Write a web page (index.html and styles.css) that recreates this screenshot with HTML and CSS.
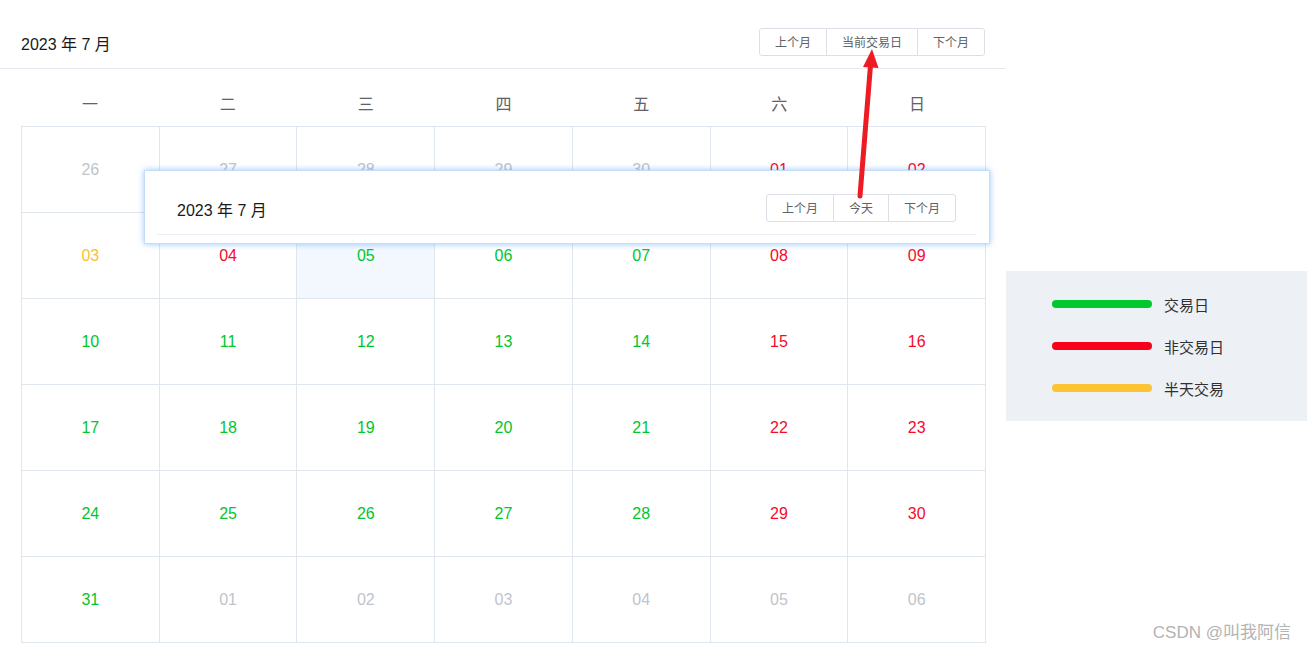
FILE: index.html
```html
<!DOCTYPE html>
<html lang="zh-CN">
<head>
<meta charset="utf-8">
<title>交易日历</title>
<link rel="stylesheet" href="styles.css">
</head>
<body>
<div class="page">
  <div class="calendar">
    <div class="cal-header">
      <div class="cal-title">2023 年 7 月</div>
      <div class="btn-group">
        <span class="btn">上个月</span><span class="btn">当前交易日</span><span class="btn">下个月</span>
      </div>
    </div>
    <div class="cal-body">
      <div class="weekdays">
        <div class="wd">一</div><div class="wd">二</div><div class="wd">三</div><div class="wd">四</div><div class="wd">五</div><div class="wd">六</div><div class="wd">日</div>
      </div>
      <div class="grid">
        <div class="cell other">26</div><div class="cell other">27</div><div class="cell other">28</div><div class="cell other">29</div><div class="cell other">30</div><div class="cell red">01</div><div class="cell red">02</div>
        <div class="cell half">03</div><div class="cell red">04</div><div class="cell green selected">05</div><div class="cell green">06</div><div class="cell green">07</div><div class="cell red">08</div><div class="cell red">09</div>
        <div class="cell green">10</div><div class="cell green">11</div><div class="cell green">12</div><div class="cell green">13</div><div class="cell green">14</div><div class="cell red">15</div><div class="cell red">16</div>
        <div class="cell green">17</div><div class="cell green">18</div><div class="cell green">19</div><div class="cell green">20</div><div class="cell green">21</div><div class="cell red">22</div><div class="cell red">23</div>
        <div class="cell green">24</div><div class="cell green">25</div><div class="cell green">26</div><div class="cell green">27</div><div class="cell green">28</div><div class="cell red">29</div><div class="cell red">30</div>
        <div class="cell green">31</div><div class="cell other">01</div><div class="cell other">02</div><div class="cell other">03</div><div class="cell other">04</div><div class="cell other">05</div><div class="cell other">06</div>
      </div>
    </div>
  </div>
  <div class="legend">
    <div class="legend-item"><span class="bar bar-green"></span><span class="legend-text">交易日</span></div>
    <div class="legend-item"><span class="bar bar-red"></span><span class="legend-text">非交易日</span></div>
    <div class="legend-item"><span class="bar bar-yellow"></span><span class="legend-text">半天交易</span></div>
  </div>
</div>

<div class="popup">
  <div class="cal-header popup-header">
    <div class="cal-title">2023 年 7 月</div>
    <div class="btn-group">
      <span class="btn">上个月</span><span class="btn">今天</span><span class="btn">下个月</span>
    </div>
  </div>
</div>

<svg class="arrow" width="1307" height="651" viewBox="0 0 1307 651">
  <line x1="860" y1="196" x2="870.6" y2="64" stroke="#ed1c24" stroke-width="5" stroke-linecap="round"/>
  <polygon points="872,49 878.5,68 863,67" fill="#ed1c24"/>
</svg>

<div class="watermark">CSDN @叫我阿信</div>
</body>
</html>
```

FILE: styles.css
```css
html, body {
  margin: 0;
  padding: 0;
  height: 651px;
  overflow: hidden;
  background: #ffffff;
}

body {
  font-family: "Liberation Sans", Arial, "Noto Sans CJK SC", sans-serif;
  position: relative;
}

.page {
  display: flex;
  align-items: flex-start;
}

.calendar {
  width: 1006px;
  flex: none;
  margin-top: 16px;
}

.cal-header {
  display: flex;
  justify-content: space-between;
  align-items: center;
  padding: 12px 21px 12px 21px;
  border-bottom: 1px solid #e4e8ef;
}

.cal-title {
  font-size: 16px;
  color: #1a1a1a;
  line-height: 22px;
  align-self: flex-end;
}

.btn-group {
  display: flex;
}

.btn {
  display: inline-flex;
  align-items: center;
  justify-content: center;
  box-sizing: border-box;
  height: 28px;
  padding: 0 15px;
  border: 1px solid #dcdfe6;
  font-family: "Noto Sans CJK SC", sans-serif;
  font-size: 12px;
  color: #606266;
  background: #fff;
  line-height: 1;
}

.btn + .btn {
  margin-left: -1px;
}

.btn:first-child {
  border-radius: 3px 0 0 3px;
}

.btn:last-child {
  border-radius: 0 3px 3px 0;
}

.cal-body {
  padding: 11px 20px 35px 21px;
}

.weekdays {
  display: grid;
  grid-template-columns: repeat(7, 1fr);
}

.wd {
  text-align: center;
  padding: 12px 0;
  line-height: 22px;
  font-size: 16px;
  color: #606266;
  font-family: "Noto Sans CJK SC", sans-serif;
}

.grid {
  display: grid;
  grid-template-columns: repeat(7, 1fr);
  border-top: 1px solid #e0e6ed;
  border-left: 1px solid #e0e6ed;
}

.cell {
  box-sizing: border-box;
  height: 86px;
  border-right: 1px solid #e0e6ed;
  border-bottom: 1px solid #e0e6ed;
  display: flex;
  align-items: center;
  justify-content: center;
  font-size: 16px;
}

.cell.other { color: #c0c4cc; }
.cell.green { color: #00c62e; }
.cell.red { color: #f50a2a; }
.cell.half { color: #fbbf2e; }
.cell.selected { background: #f2f8fe; }

.legend {
  flex: 1;
  margin-top: 271px;
  background: #edf0f5;
  padding: 12px 0 12px 46px;
}

.legend-item {
  height: 42px;
  display: flex;
  align-items: center;
  gap: 12px;
}

.bar {
  width: 100px;
  height: 8px;
  border-radius: 4px;
  display: block;
}

.bar-green { background: #00c92d; }
.bar-red { background: #f7001b; }
.bar-yellow { background: #fcc332; }

.legend-text {
  font-size: 15px;
  color: #303133;
  font-family: "Noto Sans CJK SC", sans-serif;
}

.popup {
  position: absolute;
  left: 144px;
  top: 170px;
  width: 846px;
  height: 74px;
  box-sizing: border-box;
  background: #fff;
  border: 1px solid #c5dcfa;
  box-shadow: 0 0 6px rgba(64, 150, 255, 0.55);
  padding: 11px 13px 0 12px;
}

.popup-header {
  padding: 12px 20px 12px 20px;
  border-bottom: 1px solid #ebeef5;
}

.arrow {
  position: absolute;
  left: 0;
  top: 0;
  pointer-events: none;
}

.watermark {
  position: absolute;
  right: 16px;
  top: 622px;
  line-height: 22px;
  font-size: 17px;
  color: #b3b3b3;
}
```
